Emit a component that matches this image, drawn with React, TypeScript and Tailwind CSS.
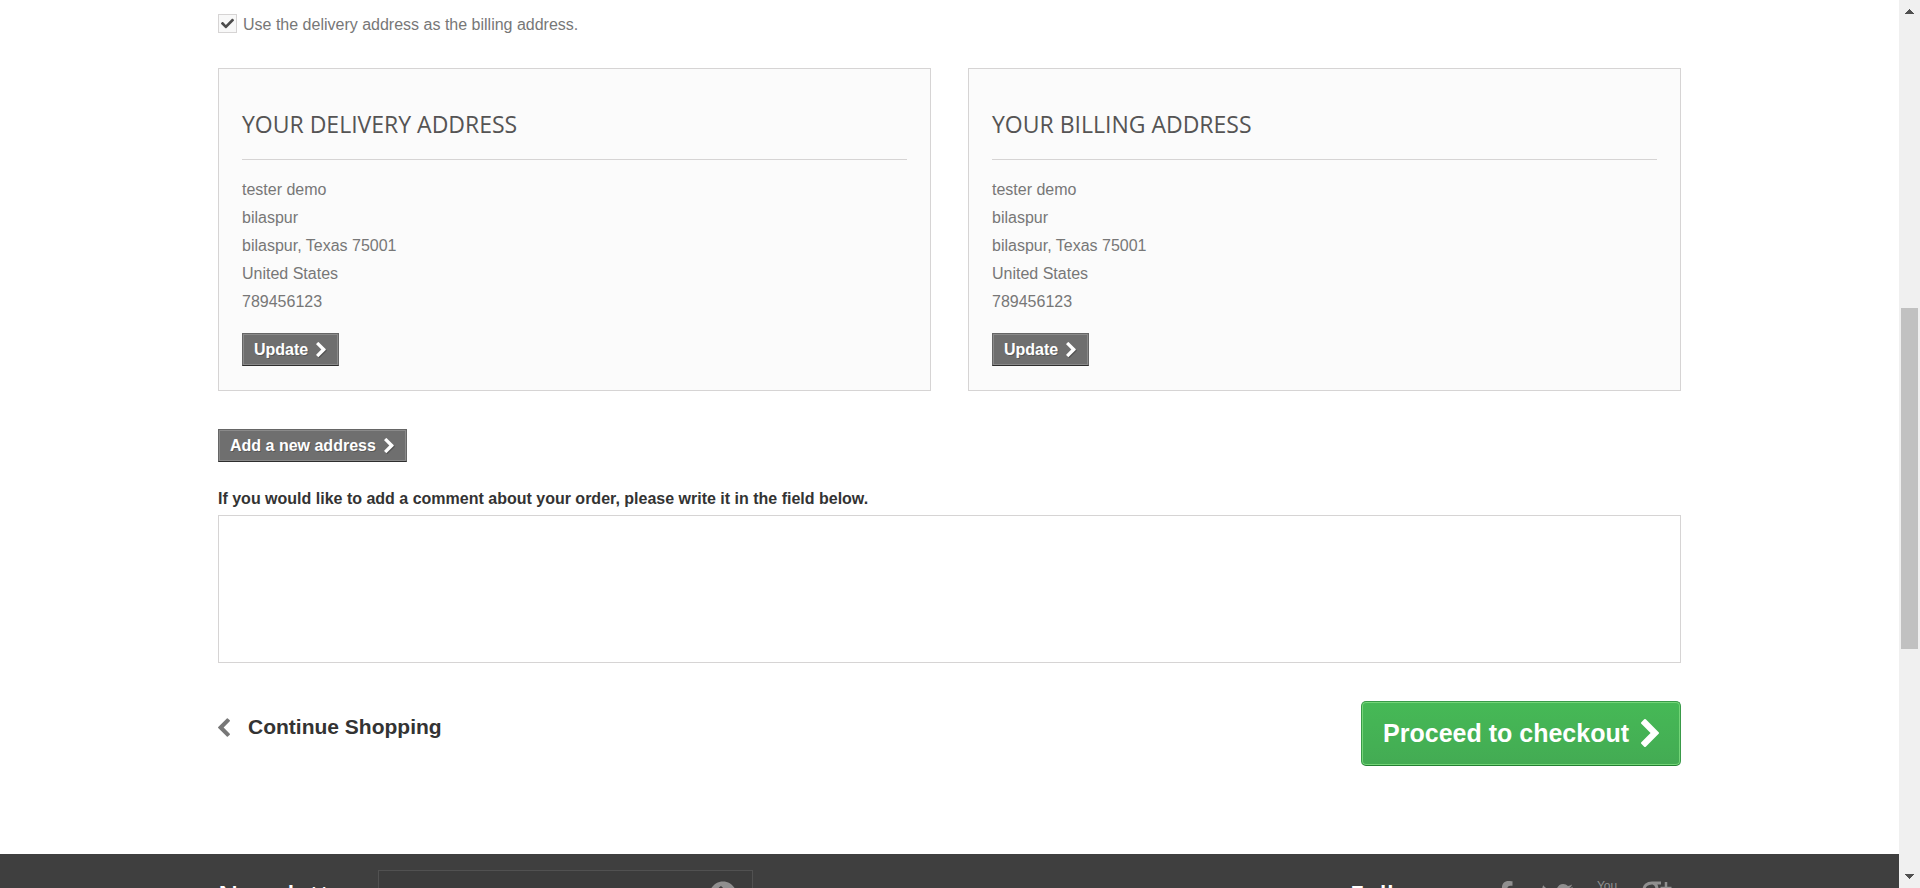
import type { ReactNode } from "react";
import { FaCheck, FaFacebookF, FaTwitter, FaYoutube, FaChevronCircleRight } from "react-icons/fa";

const address = ["tester demo", "bilaspur", "bilaspur, Texas 75001", "United States", "789456123"];

function Chevron({ className }: { className: string }) {
  return (
    <svg viewBox="346 26 1036 1612" className={className} fill="currentColor" aria-hidden="true">
      <path d="M1363 877l-742 742q-19 19-45 19t-45-19l-166-166q-19-19-19-45t19-45l531-531-531-531q-19-19-19-45t19-45l166-166q19-19 45-19t45 19l742 742q19 19 19 45t-19 45z" />
    </svg>
  );
}

function GreyButton({ children }: { children: ReactNode }) {
  return (
    <button
      type="button"
      className="flex h-[33px] items-center gap-2 border border-[#666] border-b-[#2e2e2e] bg-[#6f6f6f] pr-3 pl-[11px] text-base leading-5 font-bold text-white shadow-[inset_0_0_0_1px_#8a8a8a] [text-shadow:1px_1px_rgba(0,0,0,0.24)]"
    >
      {children}
      <Chevron className="h-[15px] w-[10px] drop-shadow-[1px_1px_0_rgba(0,0,0,0.24)]" />
    </button>
  );
}

function AddressCard({ title }: { title: string }) {
  return (
    <section className="flex flex-1 flex-col items-start border border-[#d6d4d4] bg-[#fbfbfb] px-[23px] pt-[38px] pb-6">
      <h3 className="mb-4 w-full border-b border-[#d6d4d4] pb-[18px] font-['Open_Sans',sans-serif] text-[23px] leading-[34px] font-medium text-[#555454] uppercase">
        {title}
      </h3>
      <ul className="mb-[17px] text-base leading-7">
        {address.map((line) => (
          <li key={line}>{line}</li>
        ))}
      </ul>
      <GreyButton>Update</GreyButton>
    </section>
  );
}

function GooglePlus() {
  return (
    <svg viewBox="0 0 32 30" className="h-[30px] w-8" fill="none" stroke="currentColor" aria-hidden="true">
      <path d="M20 2H11C6 2 3 5 3 8.500s3 6 6.500 6 6.500-2.500 6.500-6S14 2.500 12 2" strokeWidth="3" />
      <path d="M10 15c0 4 7 4 7 9s-4 5-8 5-7-2-7-5 4-5 9-5" strokeWidth="3" />
      <path d="M25 1v12M19.500 7h11" strokeWidth="2.500" />
    </svg>
  );
}

function Scrollbar() {
  return (
    <div className="flex w-[21px] shrink-0 flex-col items-center bg-[#f0f0f0]" aria-hidden="true">
      <svg viewBox="0 0 9 5" className="my-[9px] h-[5px] w-[9px] shrink-0" fill="#505050">
        <path d="M4 0h1v1h1v1h1v1h1v1h1v1H0V4h1V3h1V2h1V1h1z" />
      </svg>
      <div className="grow-[285]" />
      <div className="w-[17px] grow-[341] bg-[#c1c1c1]" />
      <div className="grow-[216]" />
      <svg viewBox="0 0 9 5" className="my-[9px] h-[5px] w-[9px] shrink-0" fill="#505050">
        <path d="M0 0h9v1H8v1H7v1H6v1H5v1H4V4H3V3H2V2H1V1H0z" />
      </svg>
    </div>
  );
}

export default function App() {
  return (
    <div className="flex h-screen overflow-hidden bg-white font-['Liberation_Sans',Arial,sans-serif] text-base text-[#777]">
      <div className="min-w-0 flex-1 overflow-hidden">
        <main className="mx-auto flex max-w-[1463px] flex-col pt-[14px]">
          <div className="flex h-[19px] items-center gap-[6px]">
            <span className="relative flex">
              <input
                id="same-address"
                type="checkbox"
                defaultChecked
                className="peer size-[19px] appearance-none border border-[#d6d4d4] bg-[#f8f8f8]"
              />
              <FaCheck className="pointer-events-none absolute top-[3px] left-[3px] hidden size-[13px] text-[#4c4c4c] peer-checked:block" />
            </span>
            <label htmlFor="same-address" className="pt-[2px] leading-5">
              Use the delivery address as the billing address.
            </label>
          </div>

          <div className="mt-[35px] flex gap-[37px]">
            <AddressCard title="Your delivery address" />
            <AddressCard title="Your billing address" />
          </div>

          <div className="mt-[38px] flex">
            <GreyButton>Add a new address</GreyButton>
          </div>

          <label htmlFor="comment" className="mt-[25px] leading-6 font-bold text-[#333]">
            If you would like to add a comment about your order, please write it in the field below.
          </label>
          <textarea id="comment" className="mt-1 h-[148px] resize-none border border-[#d6d4d4] bg-white p-2" />

          <div className="mt-[38px] flex items-start justify-between">
            <a href="#shop" className="mt-3 flex items-center gap-[18px] text-[21px] leading-7 font-bold text-[#333]">
              <Chevron className="h-[19px] w-3 rotate-180 text-[#777]" />
              Continue Shopping
            </a>
            <button
              type="button"
              className="flex h-[65px] items-center gap-3 rounded-[5px] border border-[#399a49] border-b-[#247f32] bg-linear-to-b from-[#46b956] to-[#43ab53] px-[21px] pb-[2px] text-[25px] leading-8 font-bold text-white shadow-[inset_0_0_0_1px_#74d578]"
            >
              Proceed to checkout
              <Chevron className="h-7 w-[18px]" />
            </button>
          </div>
        </main>

        <footer className="mt-[88px] bg-[#3f3f3f] pt-4 pb-10">
          <div className="mx-auto flex max-w-[1463px] items-start justify-between font-['Open_Sans',sans-serif] text-white">
            <form className="flex items-start">
              <label htmlFor="newsletter" className="w-40 pt-[6px] text-[26px] leading-9 font-semibold">
                Newsletter
              </label>
              <div className="flex h-[56px] w-[375px] items-start justify-end border border-[#515151] bg-[#3c3c3c] pt-[10px] pr-[15px]">
                <input id="newsletter" type="email" className="min-w-0 flex-1 self-stretch bg-transparent pl-4 outline-none" />
                <button type="submit" aria-label="Subscribe" className="text-[#908f8f]">
                  <FaChevronCircleRight className="size-7" />
                </button>
              </div>
            </form>
            <div className="flex items-start">
              <h4 className="mr-6 pt-[6px] text-[26px] leading-9 font-semibold">Follow us</h4>
              <div className="flex items-start gap-[22px] pt-[11px] pr-2 text-[#908f8f]">
                <a href="#facebook" aria-label="Facebook">
                  <FaFacebookF className="size-7" />
                </a>
                <a href="#twitter" aria-label="Twitter">
                  <FaTwitter className="size-8" />
                </a>
                <a href="#youtube" aria-label="YouTube" className="flex w-6 flex-col items-center font-['Liberation_Sans_Narrow','Liberation_Sans',sans-serif] text-xs leading-[10px]">
                  You
                  <FaYoutube className="size-5" />
                </a>
                <a href="#google" aria-label="Google Plus">
                  <GooglePlus />
                </a>
              </div>
            </div>
          </div>
        </footer>
      </div>
      <Scrollbar />
    </div>
  );
}
